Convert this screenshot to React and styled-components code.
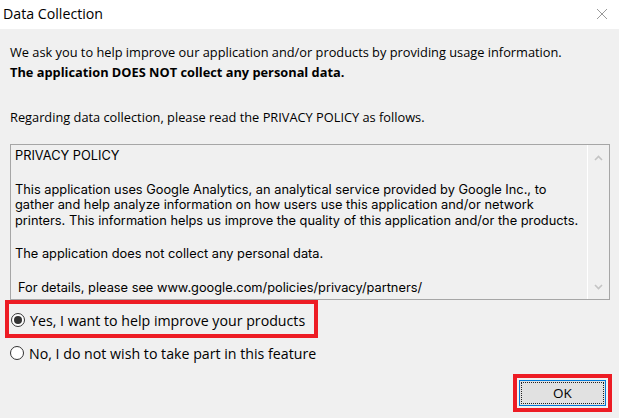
import React, { useState } from 'react';
import styled, { createGlobalStyle } from 'styled-components';

const GlobalStyle = createGlobalStyle`
  html, body {
    margin: 0;
    padding: 0;
    background: #f0f0f0;
  }
  body {
    font-family: "Open Sans", "Noto Sans", sans-serif;
    color: #000;
  }
`;

const Window = styled.div`
  width: 619px;
  height: 418px;
  background: #f0f0f0;
  display: flex;
  flex-direction: column;
  overflow: hidden;
`;

const TitleBar = styled.div`
  height: 29px;
  background: #fff;
  display: flex;
  align-items: center;
  justify-content: space-between;
  padding: 0 11px 0 3px;
  flex-shrink: 0;
`;

const Title = styled.span`
  font-size: 14.2px;
  line-height: 20px;
  margin-top: -2px;
`;

const CloseButton = styled.button`
  border: 0;
  background: transparent;
  padding: 0;
  width: 12px;
  height: 12px;
  display: flex;
  cursor: default;
  margin-top: -2px;
`;

const Body = styled.div`
  padding: 0 9px 0 10px;
  display: flex;
  flex-direction: column;
  font-size: 12.8px;
`;

const Intro = styled.p`
  margin: 14px 0 0;
  line-height: 19.5px;
`;

const Strong = styled.span`
  display: block;
  font-weight: 700;
`;

const Lead = styled.p`
  margin: 25px 0 0;
  line-height: 20px;
`;

const PolicyBox = styled.div`
  margin-top: 17px;
  height: 156px;
  box-sizing: border-box;
  border: 1px solid #a6a6a6;
  display: flex;
`;

const PolicyText = styled.div`
  flex: 1;
  padding: 3px 0 0 4px;
  font-family: Inter, "Open Sans", sans-serif;
  font-size: 12.8px;
  white-space: nowrap;
  overflow: hidden;
`;

const PolicyPara = styled.div`
  margin: ${(p) => (p.$first ? '0' : '18px')} 0 0;
  padding-left: ${(p) => (p.$indent ? '3px' : '0')};
`;

const PolicyLine = styled.div`
  height: 15.6px;
  line-height: 15.6px;
`;

const ScrollBar = styled.div`
  width: 21px;
  flex-shrink: 0;
  border-left: 1px solid #fff;
  display: flex;
  flex-direction: column;
  justify-content: space-between;
  align-items: center;
  padding: 10px 0 9px;
`;

const Options = styled.div`
  margin-left: -5px;
  display: flex;
  flex-direction: column;
`;

const Highlight = styled.div`
  border: 4px solid #ed1c24;
  align-self: flex-start;
`;

const RadioRow = styled.label`
  display: flex;
  align-items: center;
  gap: 5px;
  height: 20px;
  font-size: 14.2px;
  white-space: nowrap;
  padding: ${(p) => (p.$boxed ? '6px 9px 4px 2px' : '0 0 0 5px')};
  margin-top: ${(p) => (p.$boxed ? '0' : '5px')};
  cursor: default;
`;

const RadioCircle = styled.span`
  width: 14px;
  height: 14px;
  flex-shrink: 0;
  box-sizing: border-box;
  border-radius: 50%;
  border: 1px solid #333;
  background: #fff;
  display: flex;
  align-items: center;
  justify-content: center;

  &::after {
    content: '';
    width: 8px;
    height: 8px;
    border-radius: 50%;
    background: ${(p) => (p.$checked ? '#333' : 'transparent')};
  }
`;

const Footer = styled.div`
  margin: 11px -2px 0 0;
  display: flex;
  justify-content: flex-end;
`;

const OkFrame = styled.div`
  border: 4px solid #ed1c24;
  padding: 2px;
`;

const OkButton = styled.button`
  width: 87px;
  height: 26px;
  box-sizing: border-box;
  border: 1px solid #0078d7;
  background: #e1e1e1;
  padding: 1px;
  font-family: inherit;
  font-size: 13.5px;
  color: #000;
  cursor: default;
`;

const FocusRing = styled.span`
  display: flex;
  align-items: center;
  justify-content: center;
  height: 100%;
  box-sizing: border-box;
  border: 1px dotted #222;
`;

const Chevron = ({ up }) => (
  <svg width="9" height="6" viewBox="0 0 9 6">
    <polyline
      points={up ? '1,5 4.5,1.5 8,5' : '1,1 4.5,4.5 8,1'}
      fill="none"
      stroke="#c4c4c4"
      strokeWidth="1.6"
    />
  </svg>
);

const policy = [
  ['PRIVACY POLICY'],
  [
    'This application uses Google Analytics, an analytical service provided by Google Inc., to',
    'gather and help analyze information on how users use this application and/or network',
    'printers. This information helps us improve the quality of this application and/or the products.',
  ],
  ['The application does not collect any personal data.'],
  ['For details, please see www.google.com/policies/privacy/partners/'],
];

const options = [
  { id: 'yes', label: 'Yes, I want to help improve your products' },
  { id: 'no', label: 'No, I do not wish to take part in this feature' },
];

export default function App() {
  const [choice, setChoice] = useState('yes');

  return (
    <>
      <GlobalStyle />
      <Window>
        <TitleBar>
          <Title>Data Collection</Title>
          <CloseButton aria-label="Close">
            <svg width="12" height="12" viewBox="0 0 12 12">
              <path d="M1 1 L11 11 M11 1 L1 11" stroke="#9a9a9a" strokeWidth="1" />
            </svg>
          </CloseButton>
        </TitleBar>
        <Body>
          <Intro>
            We ask you to help improve our application and/or products by providing usage information.
            <Strong>The application DOES NOT collect any personal data.</Strong>
          </Intro>
          <Lead>Regarding data collection, please read the PRIVACY POLICY as follows.</Lead>
          <PolicyBox>
            <PolicyText>
              {policy.map((para, i) => (
                <PolicyPara key={i} $first={i === 0} $indent={i === policy.length - 1}>
                  {para.map((line) => (
                    <PolicyLine key={line}>{line}</PolicyLine>
                  ))}
                </PolicyPara>
              ))}
            </PolicyText>
            <ScrollBar>
              <Chevron up />
              <Chevron />
            </ScrollBar>
          </PolicyBox>
          <Options>
            {options.map((o, i) => {
              const row = (
                <RadioRow key={o.id} $boxed={i === 0} onClick={() => setChoice(o.id)}>
                  <RadioCircle $checked={choice === o.id} />
                  {o.label}
                </RadioRow>
              );
              return i === 0 ? <Highlight key={o.id}>{row}</Highlight> : row;
            })}
          </Options>
          <Footer>
            <OkFrame>
              <OkButton>
                <FocusRing>OK</FocusRing>
              </OkButton>
            </OkFrame>
          </Footer>
        </Body>
      </Window>
    </>
  );
}
